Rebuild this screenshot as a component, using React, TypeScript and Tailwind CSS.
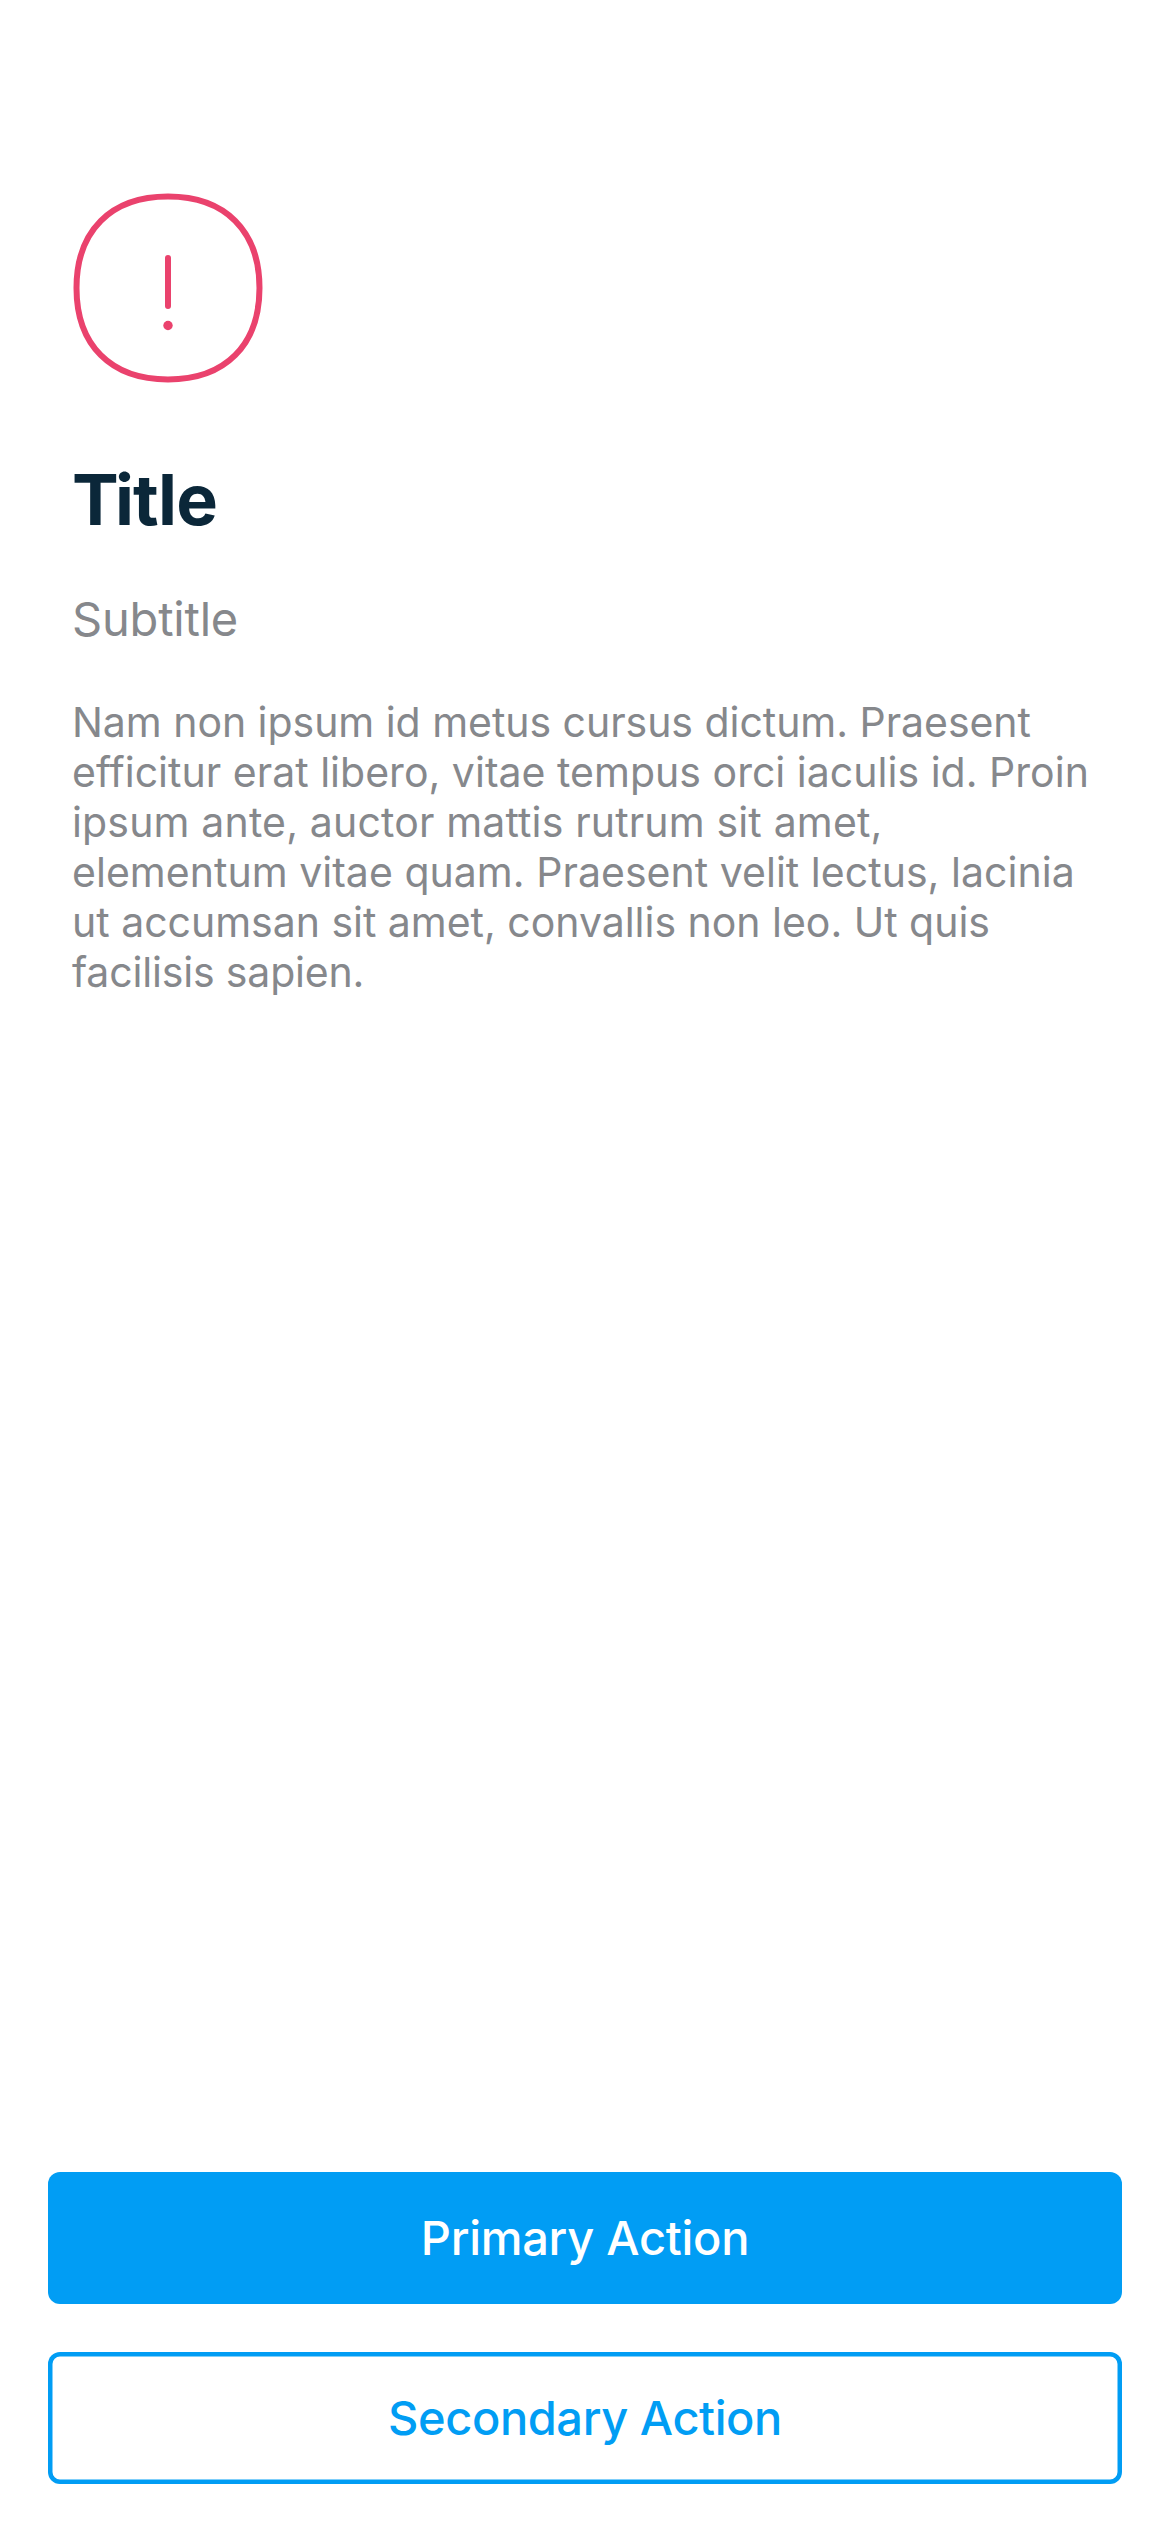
const BODY_LINES = [
  { text: "Nam non ipsum id metus cursus dictum. Praesent", className: "tracking-[-0.04px]" },
  { text: "efficitur erat libero, vitae tempus orci iaculis id. Proin", className: "tracking-[0.02px]" },
  { text: "ipsum ante, auctor mattis rutrum sit amet,", className: "tracking-[0.16px]" },
  { text: "elementum vitae quam. Praesent velit lectus, lacinia", className: "tracking-[0.03px]" },
  { text: "ut accumsan sit amet, convallis non leo. Ut quis", className: "tracking-[-0.02px]" },
  { text: "facilisis sapien.", className: "tracking-[-0.17px]" },
];

function AlertIcon() {
  return (
    <svg className="size-48" viewBox="0 0 192 192" fill="none" aria-hidden="true">
      <path
        d="M96 4.5C153.2 4.5 187.5 38.8 187.5 96C187.5 153.2 153.2 187.5 96 187.5C38.8 187.5 4.5 153.2 4.5 96C4.5 38.8 38.8 4.5 96 4.5Z"
        stroke="#EA426D"
        strokeWidth="6"
      />
      <path d="M96 66V114" stroke="#EA426D" strokeWidth="6" strokeLinecap="round" />
      <circle cx="96" cy="133.5" r="4.7" fill="#EA426D" />
    </svg>
  );
}

export default function App() {
  return (
    <main className="flex h-[2532px] w-[1170px] flex-col justify-between bg-white px-12 pt-48 pb-12 font-['Inter',sans-serif]">
      <section className="px-6">
        <AlertIcon />
        <h1 className="mt-[74px] text-[70px] leading-[84px] font-bold tracking-[-0.8px] text-[#0B2739]">
          <span className="tracking-[-3.8px]">T</span>itle
        </h1>
        <h2 className="mt-12 text-[47px] leading-[58px] tracking-[-0.2px] text-[#86888C]">Subtitle</h2>
        <p className="mt-[49px] text-[41px] leading-[50px] text-[#86888C]">
          {BODY_LINES.map((line) => (
            <span key={line.text} className={`block whitespace-nowrap ${line.className}`}>
              {line.text}
            </span>
          ))}
        </p>
      </section>
      <div className="flex flex-col gap-12 text-[47px] leading-[58px] font-medium">
        <button className="flex h-[132px] items-center justify-center rounded-xl bg-[#019DF4] tracking-[-0.27px] text-white">
          Primary Action
        </button>
        <button className="flex h-[132px] items-center justify-center rounded-xl tracking-[-0.42px] text-[#019DF4] shadow-[inset_0_0_0_4.5px_#019DF4]">
          Secondary Action
        </button>
      </div>
    </main>
  );
}
